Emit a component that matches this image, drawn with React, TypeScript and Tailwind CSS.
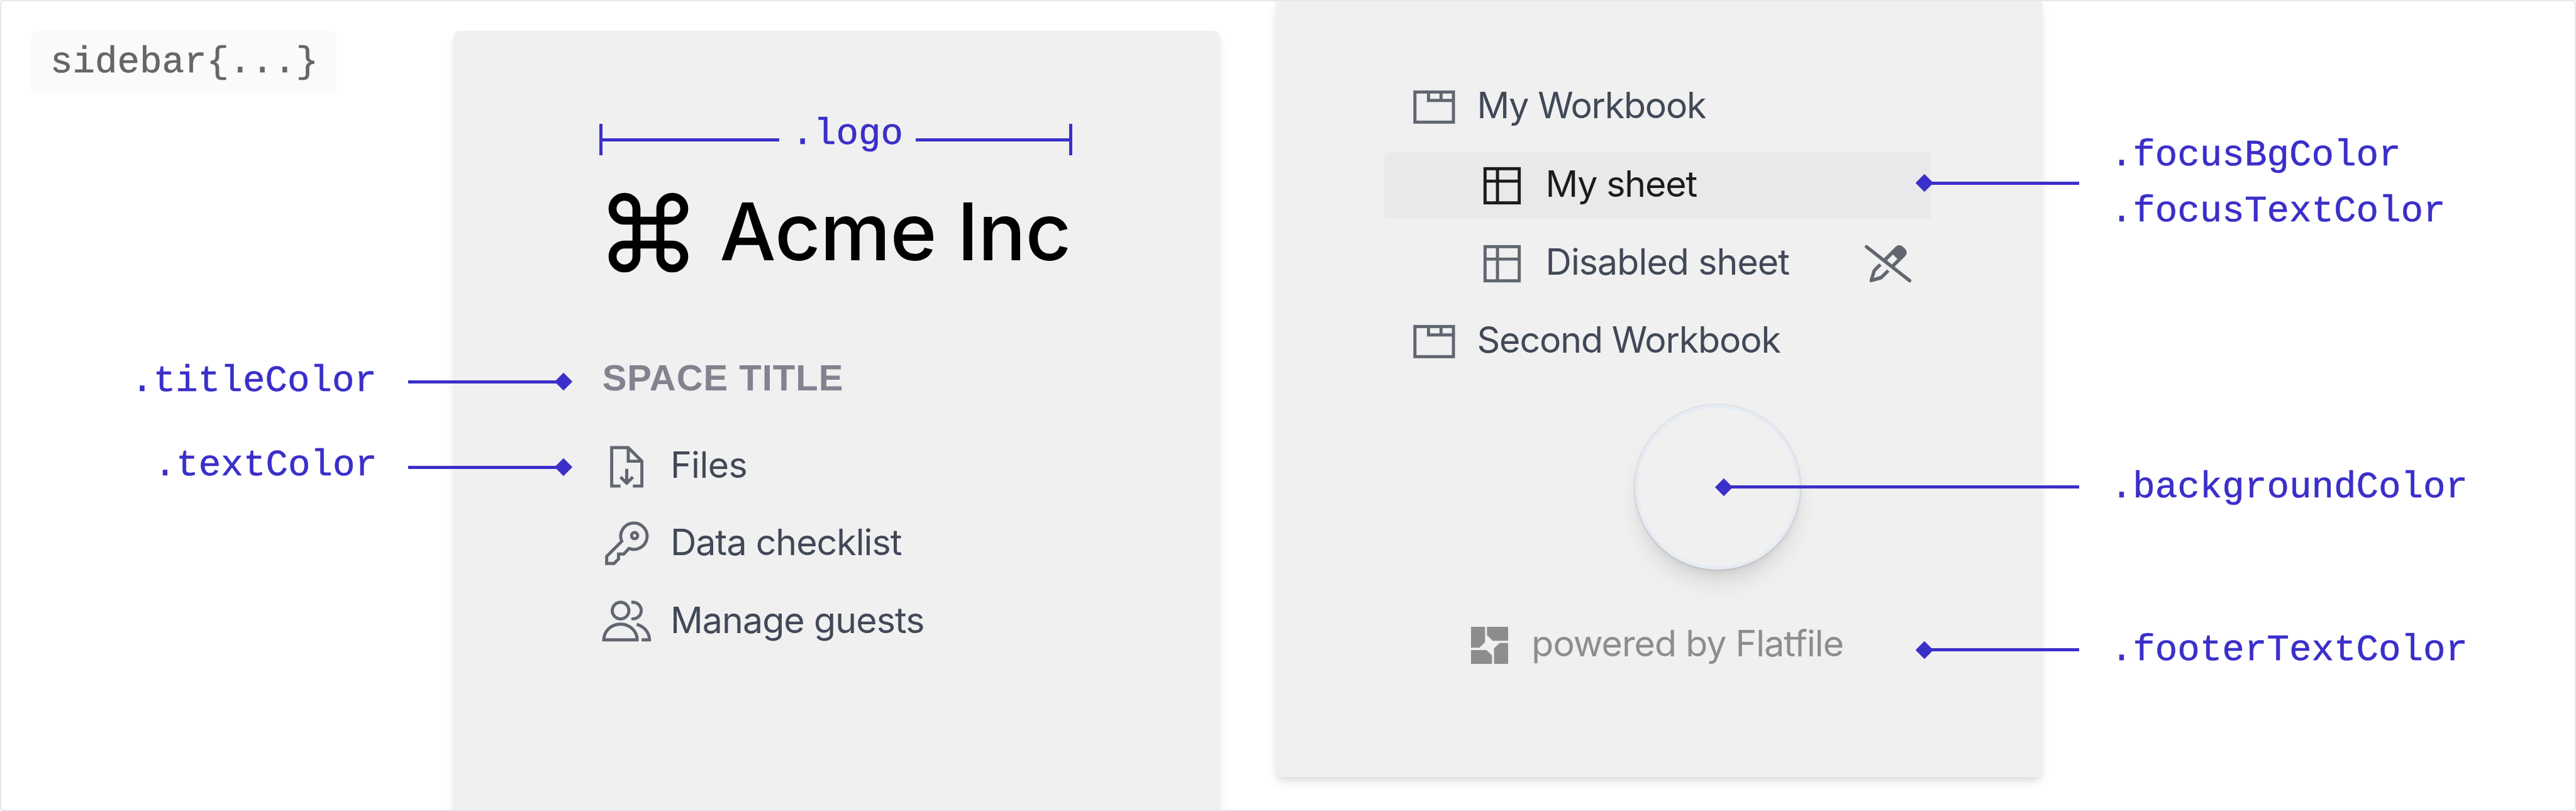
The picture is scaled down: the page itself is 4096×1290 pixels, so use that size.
import type { ReactNode } from "react";
import clsx from "clsx";

function Connector({ length, end }: { length: string; end: "left" | "right" }) {
  return (
    <div
      className={clsx(
        "flex shrink-0 items-center",
        end === "left" && "flex-row-reverse",
        length,
      )}
    >
      <div className="h-[5px] flex-1 bg-[#3b2fc9]" />
      <div className="-mx-[10px] size-[20px] shrink-0 rotate-45 bg-[#3b2fc9]" />
    </div>
  );
}

function FileIcon() {
  return (
    <svg viewBox="0 0 128 128" className="size-[79px] shrink-0" fill="none" stroke="#616670" strokeWidth="8">
      <path d="M48 113.6H25.3V14.5H68L103 49.6V113.6H80" />
      <path d="M68 14.5V49.6H103" />
      <path d="M64 69.2V106M48 90.5L64 106.2L80 90.5" />
    </svg>
  );
}

function KeyIcon() {
  return (
    <svg viewBox="0 0 128 128" className="size-[79px] shrink-0" fill="none" stroke="#616670" strokeWidth="8">
      <path d="M51.2 56.8L12.4 95.8V113.8H31.5L43 102.2V89.6H56.5L70 75.2A34 34 0 1 0 51.2 56.8Z" />
      <circle cx="84.3" cy="42" r="8" />
    </svg>
  );
}

function UsersIcon() {
  return (
    <svg viewBox="0 0 128 128" className="size-[79px] shrink-0" fill="none" stroke="#616670" strokeWidth="8">
      <circle cx="48.2" cy="34.4" r="21.4" />
      <path d="M5 109.8A43 40.6 0 0 1 91 109.8Z" />
      <path d="M76 13.1H80.2A21.3 21.3 0 0 1 80.2 55.7H76" />
      <path d="M89.7 70A42.5 42.5 0 0 1 122.8 109.8H102.3" />
    </svg>
  );
}

function WorkbookIcon() {
  return (
    <svg viewBox="0 0 128 128" className="size-[79px] shrink-0" fill="none" stroke="#616670" strokeWidth="8">
      <rect x="14.3" y="24.9" width="99.2" height="77.7" />
      <path d="M49.3 25V46.7H113M81.6 25V46.7" />
    </svg>
  );
}

function SheetIcon() {
  return (
    <svg viewBox="0 0 128 128" className="size-[79px] shrink-0" fill="none" stroke="currentColor" strokeWidth="8">
      <rect x="20" y="20" width="88" height="88" />
      <path d="M52 20V108M20 52H108" />
    </svg>
  );
}

function ReadOnlyIcon() {
  return (
    <svg viewBox="0 0 540 480" className="h-[99px] w-[111px] shrink-0" fill="#616670">
      <path d="M97 109L430 371" stroke="#616670" strokeWidth="27" strokeLinecap="round" />
      <path
        fillRule="evenodd"
        d="M232 198L323 107Q350 86 376 106L397 127Q418 153 397 181L313 264ZM301 168L255 214L293 246L336 204Z"
      />
      <path d="M193 237L150 281Q145 287 143 293L121 366Q118 383 134 384L208 363Q215 361 222 354L275 301L255 285L205 334L153 351L168 300L214 254Z" />
    </svg>
  );
}

function CommandMark() {
  return (
    <svg viewBox="0 0 24 24" className="size-[152px] shrink-0" fill="none" stroke="#000" strokeWidth="2">
      <path d="M15 6v12a3 3 0 1 0 3-3H6a3 3 0 1 0 3 3V6a3 3 0 1 0-3 3h12a3 3 0 1 0-3-3" />
    </svg>
  );
}

function FlatfileMark() {
  return (
    <svg viewBox="0 0 288 288" className="size-[59px] shrink-0" fill="#8d8d8d">
      <path d="M0 0H109V119L65 162H0Z" />
      <path d="M124 0H288V108H167L124 65Z" />
      <path d="M288 126V288H179V167L222 126Z" />
      <path d="M0 180H120L163 222V288H0Z" />
    </svg>
  );
}

function NavItem({ icon, children, tracking }: { icon: ReactNode; children: ReactNode; tracking: string }) {
  return (
    <li className="flex h-[123.4px] items-center gap-[29.5px] text-[#414857]">
      {icon}
      <span className={clsx("pb-[7px]", tracking)}>{children}</span>
    </li>
  );
}

const panelShadow =
  "shadow-[0_10px_15px_-2.5px_rgba(0,0,0,0.1),0_5px_10px_-2.5px_rgba(0,0,0,0.06)]";
const mono =
  "font-['Liberation_Mono',monospace] text-[59.2px] whitespace-pre [-webkit-text-stroke:0.6px_currentColor]";

export default function App() {
  return (
    <div className="relative flex h-[1290px] w-[4096px] overflow-hidden bg-white font-['Inter',sans-serif] text-[57.3px] leading-[80px]">
      <aside className={clsx("relative z-10 w-[721px] shrink-0 pt-[49px] text-[#3b2fc9]", mono)}>
        <div className="ml-[49px] flex h-[99px] w-[486px] items-center justify-center rounded-[10px] bg-[#f9fafc] pb-[1px] pl-[2px] pt-[3px] text-[#666666]">
          sidebar{"{...}"}
        </div>
        <div className="mt-[419px] flex h-[80px] items-center">
          <span className="w-[599px] shrink-0 text-right">.titleColor</span>
          <div className="w-[50px] shrink-0" />
          <Connector length="w-[246.7px]" end="right" />
        </div>
        <div className="mt-[56px] flex h-[80px] items-center">
          <span className="w-[600px] shrink-0 pb-[4px] text-right">.textColor</span>
          <div className="w-[49px] shrink-0" />
          <Connector length="w-[246.7px]" end="right" />
        </div>
      </aside>

      <section className={clsx("mt-[49px] h-[1260px] w-[1219px] shrink-0 rounded-t-[10px] bg-[#f0f0f0] pl-[231.5px] pt-[148.4px]", panelShadow)}>
        <div className="flex h-[49.4px] w-[752.5px] items-center text-[#3b2fc9]">
          <div className="h-full w-[5px] bg-[#3b2fc9]" />
          <div className="h-[5px] w-[281.2px] bg-[#3b2fc9]" />
          <div className="flex flex-1 justify-center">
            <span className={clsx("pb-[17px]", mono)}>.logo</span>
          </div>
          <div className="h-[5px] w-[244.3px] bg-[#3b2fc9]" />
          <div className="h-full w-[5px] bg-[#3b2fc9]" />
        </div>
        <div className="mt-[46.9px] flex h-[152px] items-center gap-[37.7px] pl-[2.1px]">
          <CommandMark />
          <span className="pb-[3px] text-[126.2px] font-medium leading-[152px] tracking-[-0.74px] text-black">Acme Inc</span>
        </div>
        <h2 className="mt-[115px] pl-[5.2px] font-['Liberation_Sans',sans-serif] text-[58px] font-bold tracking-[1px] text-[#82838f]">SPACE TITLE</h2>
        <ul className="mt-[40px] pl-[4.9px]">
          <NavItem icon={<FileIcon />} tracking="tracking-[-0.6px]">Files</NavItem>
          <NavItem icon={<KeyIcon />} tracking="tracking-[-1.02px]">Data checklist</NavItem>
          <NavItem icon={<UsersIcon />} tracking="tracking-[-0.93px]">Manage guests</NavItem>
        </ul>
      </section>

      <section className={clsx("ml-[88px] h-[1236px] w-[1219px] shrink-0 rounded-b-[10px] bg-[#f0f0f0] pt-[117.4px]", panelShadow)}>
        <ul className="ml-[173px] flex w-[870px] flex-col gap-[18.2px] text-[#414857]">
          <li className="flex h-[106.3px] items-center gap-[29px] pl-[39.5px]">
            <WorkbookIcon />
            <span className="pb-[7px] tracking-[-1.24px]">My Workbook</span>
          </li>
          <li className="flex h-[106.3px] items-center gap-[29.5px] rounded-[7px] bg-[#e9e9eb] pl-[148px] text-[#1b1b1c]">
            <SheetIcon />
            <span className="pb-[7px] tracking-[-1.2px]">My sheet</span>
          </li>
          <li className="flex h-[106.3px] items-center gap-[29.5px] pl-[148px] pr-[11.8px]">
            <div className="flex text-[#616670]">
              <SheetIcon />
            </div>
            <span className="flex-1 pb-[7px] tracking-[-0.95px]">Disabled sheet</span>
            <ReadOnlyIcon />
          </li>
          <li className="flex h-[106.3px] items-center gap-[29px] pl-[39.5px]">
            <WorkbookIcon />
            <span className="pb-[7px] tracking-[-1.14px]">Second Workbook</span>
          </li>
        </ul>
        <div className="ml-[572px] mt-[46.7px] size-[262px] rounded-full border-[5px] border-[#e6ecf4] bg-[#f0f0f0] shadow-[0_0_0_2.5px_rgba(0,0,0,0.05),0_25px_37px_-7px_rgba(0,0,0,0.12),0_10px_15px_-5px_rgba(0,0,0,0.06)]" />
        <footer className="ml-[311px] mt-[80.5px] flex h-[80px] items-center gap-[37.3px] text-[#8d8d8d]">
          <FlatfileMark />
          <span className="pb-[7px] tracking-[-1px]">powered by Flatfile</span>
        </footer>
      </section>

      <aside className={clsx("relative z-10 w-[849px] shrink-0 pt-[201.2px] text-[#3b2fc9]", mono)}>
        <div className="flex h-[180px] items-center">
          <div className="flex w-[59.4px] shrink-0 justify-end">
            <Connector length="w-[246.7px]" end="left" />
          </div>
          <div className="ml-[49.4px] pt-[3px] leading-[88.8px]">
            <div>.focusBgColor</div>
            <div>.focusTextColor</div>
          </div>
        </div>
        <div className="mt-[353.6px] flex h-[80px] items-center">
          <div className="flex w-[59.4px] shrink-0 justify-end">
            <Connector length="w-[565px]" end="left" />
          </div>
          <span className="ml-[49.4px] pt-[2px]">.backgroundColor</span>
        </div>
        <div className="mt-[179.1px] flex h-[80px] items-center">
          <div className="flex w-[59.4px] shrink-0 justify-end">
            <Connector length="w-[246.7px]" end="left" />
          </div>
          <span className="ml-[49.4px] pt-[2px]">.footerTextColor</span>
        </div>
      </aside>

      <div className="pointer-events-none absolute inset-0 z-20 rounded-[5px] border-[2.5px] border-[#e7e7e7]" />
    </div>
  );
}
